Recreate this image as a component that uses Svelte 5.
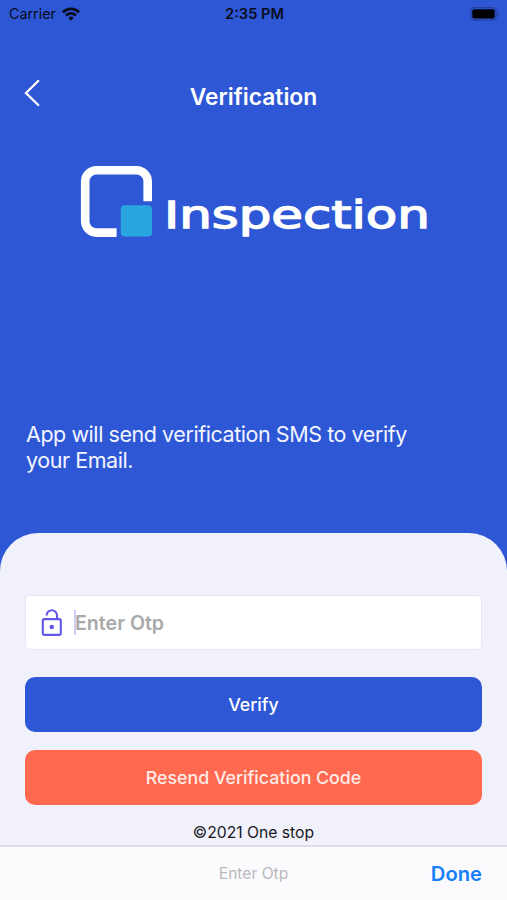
<script lang="ts">
  let otp = $state('');
  const year = 2021;
</script>

<div class="screen">
  <div class="status-bar">
    <div class="carrier">
      <span>Carrier</span>
      <svg width="18" height="14" viewBox="0 0 18 14" aria-hidden="true">
        <g fill="none" stroke="#080d1c" stroke-width="2.7">
          <path d="M.9 5.2a11.5 11.5 0 0 1 16.2 0" />
          <path d="M4 8.5a7.1 7.1 0 0 1 10 0" />
        </g>
        <path d="M6.2 10.8a4 4 0 0 1 5.6 0L9 13.7z" fill="#080d1c" />
      </svg>
    </div>
    <span class="time">2:35 PM</span>
    <svg class="battery" width="30" height="14" viewBox="0 0 30 14" aria-hidden="true">
      <rect x=".8" y=".7" width="25.4" height="12.4" rx="3.8" fill="none" stroke="#233f9f" stroke-width="1.2" />
      <rect x="2.3" y="2.2" width="22.4" height="9.4" rx="2" fill="#000" />
      <path d="M27.6 5v4c1.8-.7 1.8-3.3 0-4z" fill="#233f9f" />
    </svg>
  </div>

  <header>
    <button class="back" type="button" aria-label="Back">
      <svg width="16" height="28" viewBox="0 0 16 28">
        <path d="M14.2 2 2 14l12.2 12" fill="none" stroke="#fff" stroke-width="2.3" stroke-linecap="round" />
      </svg>
    </button>
    <h1>Verification</h1>
  </header>

  <div class="brand">
    <svg width="350" height="76" viewBox="0 0 350 76" role="img" aria-label="Inspection">
      <path
        d="M36.6 67.6H16.5A11.3 11.3 0 0 1 5.2 56.3V16.5A11.3 11.3 0 0 1 16.5 5.2H56.4A11.3 11.3 0 0 1 67.7 16.5V36.2"
        fill="none"
        stroke="#fff"
        stroke-width="8.6"
      />
      <rect x="40.8" y="40.2" width="31.2" height="31.4" rx="3.8" fill="#29a5e0" />
      <text class="wordmark" x="84" y="62.6" textLength="266" lengthAdjust="spacingAndGlyphs">Inspection</text>
    </svg>
  </div>

  <p class="intro">App will send verification SMS to verify your Email.</p>

  <main class="sheet">
    <label class="field">
      <svg width="22" height="28" viewBox="0 0 22 28" aria-hidden="true">
        <g fill="none" stroke="#6258e8" stroke-width="2.1">
          <rect x="1.8" y="10.1" width="18" height="15.8" rx="1.6" />
          <path d="M5.6 6.4a5.2 5.2 0 0 1 10.4 0v3.7" />
        </g>
        <circle cx="10.8" cy="18" r="2.3" fill="#6258e8" />
      </svg>
      <span class="caret"></span>
      <input bind:value={otp} placeholder="Enter Otp" aria-label="Enter Otp" />
    </label>
    <button class="btn verify" type="button">Verify</button>
    <button class="btn resend" type="button">Resend Verification Code</button>
    <p class="copyright">©{year} One stop</p>
  </main>

  <div class="accessory">
    <span class="hint">Enter Otp</span>
    <button class="done" type="button">Done</button>
  </div>
</div>

<style>
  :global(body) {
    margin: 0;
  }

  .screen {
    display: flex;
    flex-direction: column;
    width: 507px;
    height: 900px;
    overflow: hidden;
    background: #2e57d5;
    font-family: Inter, 'Liberation Sans', sans-serif;
  }

  button {
    padding: 0;
    border: 0;
    background: none;
    font-family: inherit;
  }

  svg {
    display: block;
    flex: none;
  }

  .status-bar {
    display: grid;
    grid-template-columns: 1fr auto 1fr;
    align-items: center;
    height: 27px;
    padding: 0 7px 0 9px;
    color: #080d1c;
    font-size: 14.3px;
  }

  .carrier {
    display: flex;
    align-items: center;
    gap: 6px;
  }

  .time {
    font-size: 14.6px;
    font-weight: 600;
  }

  .battery {
    justify-self: end;
  }

  header {
    display: grid;
    grid-template-columns: 60px 1fr 60px;
    align-items: center;
    height: 60px;
    margin-top: 37px;
  }

  .back {
    align-self: start;
    margin: 15px 0 0 24px;
  }

  h1 {
    margin: 6px 0 0;
    color: #fff;
    font-size: 22.8px;
    font-weight: 600;
    line-height: 28px;
    text-align: center;
  }

  .brand {
    display: flex;
    margin: 41px 0 0 80px;
  }

  .wordmark {
    fill: #fff;
    stroke: #fff;
    stroke-width: 1.3px;
    font-family: 'DejaVu Sans', sans-serif;
    font-size: 37px;
  }

  .intro {
    width: 400px;
    margin: 180px 0 0 26px;
    color: #f3f5ff;
    font-size: 21.5px;
    letter-spacing: -0.44px;
    line-height: 26px;
  }

  .sheet {
    display: flex;
    flex: 1;
    flex-direction: column;
    margin-top: 60px;
    padding: 62px 25px 0;
    border-radius: 38px 38px 0 0;
    background: #f0f1fb;
  }

  .field {
    display: flex;
    align-items: center;
    box-sizing: border-box;
    height: 55px;
    padding-left: 15px;
    border: 1px solid #e6e7f1;
    border-radius: 5px;
    background: #fff;
  }

  .caret {
    width: 2px;
    height: 25px;
    margin-left: 11px;
    background: #cfcdf7;
  }

  input {
    flex: 1;
    min-width: 0;
    margin-left: -1px;
    padding: 0;
    border: 0;
    outline: 0;
    background: transparent;
    font-family: inherit;
    font-size: 19.6px;
    font-weight: 600;
  }

  input::placeholder {
    color: #a9a9a9;
    opacity: 1;
  }

  .btn {
    height: 55px;
    border-radius: 10px;
    color: #fff;
    font-size: 17.8px;
    font-weight: 500;
  }

  .verify {
    margin-top: 27px;
    background: #2e57d5;
  }

  .resend {
    margin-top: 18px;
    background: #ff6950;
    color: #ffece8;
  }

  .copyright {
    margin: 18px 0 0;
    color: #17171c;
    font-size: 15.7px;
    line-height: 20px;
    text-align: center;
  }

  .accessory {
    display: grid;
    grid-template-columns: 1fr auto 1fr;
    align-items: center;
    box-sizing: border-box;
    height: 55px;
    padding: 0 25px;
    border-top: 2px solid #dddee5;
    background: #fbfbfe;
  }

  .hint {
    grid-column: 2;
    color: #b8b8bb;
    font-size: 15.6px;
  }

  .done {
    justify-self: end;
    color: #147efb;
    font-size: 20.2px;
    font-weight: 600;
  }
</style>
